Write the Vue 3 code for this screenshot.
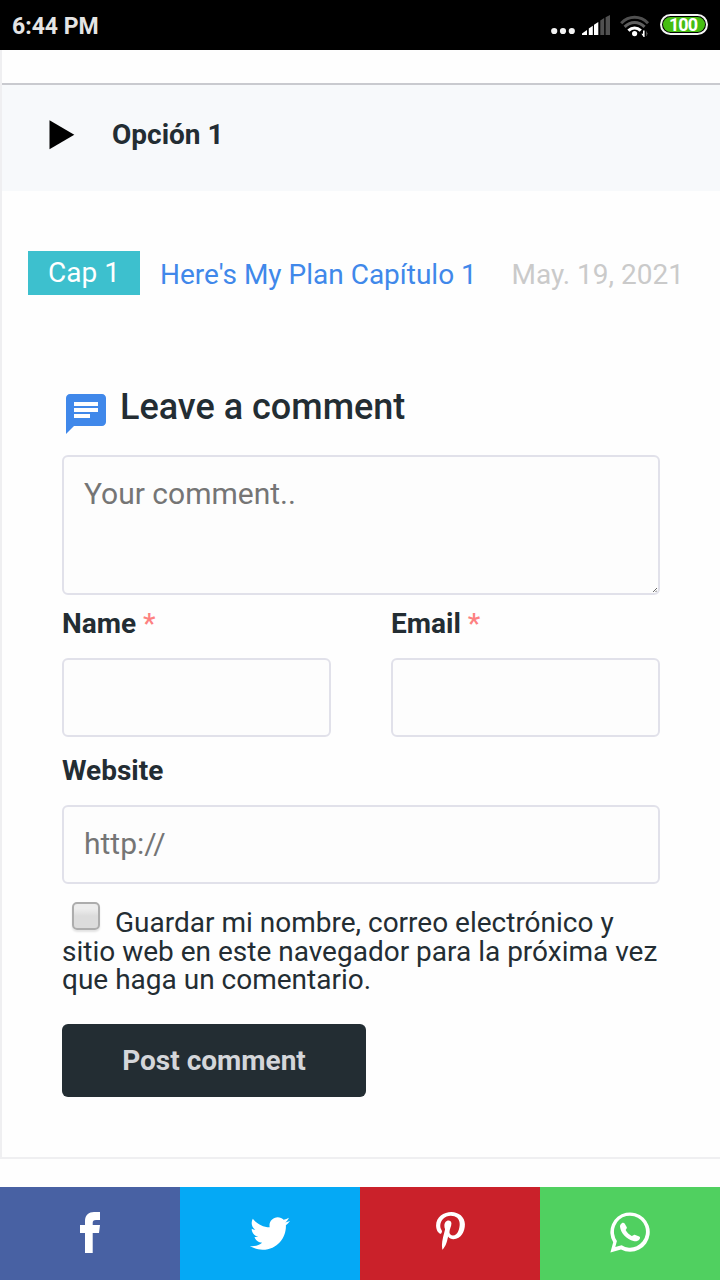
<template>
  <div class="screen">
    <header class="status-bar">
      <span class="clock">6:44 PM</span>
      <div class="status-icons">
        <svg class="dots" viewBox="0 0 24 8" width="24" height="8" fill="#f2f2f2">
          <circle cx="3.2" cy="4" r="3.1" />
          <circle cx="12" cy="4" r="3.1" />
          <circle cx="20.8" cy="4" r="3.1" />
        </svg>
        <svg class="signal" viewBox="0 0 28 20" width="28" height="20">
          <path fill="#fff" d="M0 20v-1.5l5-3.6V20zM6.8 20v-6.5l4-2.8V20zM12 20V9.8L16.3 7v13z" />
          <path fill="#505050" d="M18.3 20V5.6l3.9-2.7V20zM23.6 20V2.2L28 0v20z" />
        </svg>
        <svg class="wifi" viewBox="0 0 30 22" width="30" height="22" fill="none">
          <path stroke="#505050" stroke-width="3" d="M1.2 8.2C9 .4 20.2.4 28 8.2" />
          <path stroke="#606060" stroke-width="3" d="M4.6 11.8c6-5.8 14-5.8 20 0" />
          <path stroke="#fff" stroke-width="3.2" d="M8.4 15.6c3.8-3.4 8.6-3.4 12.4 0" />
          <circle cx="14.6" cy="18.6" r="2.6" fill="#fff" />
          <path fill="#fff" d="M21.4 18.8h1.6V15.6h1.6V22h-1z" />
          <path fill="#505050" d="M26 15.6l2 3.6h-1.2V21H26z" />
        </svg>
        <div class="battery"><span>100</span></div>
      </div>
    </header>

    <main class="page">
      <div class="option-bar">
        <svg viewBox="0 0 26 30" width="26" height="30"><path d="M.5.2L25.3 14.7.5 29.3z" /></svg>
        <strong>Opción 1</strong>
      </div>

      <div class="chapter">
        <span class="tag">Cap 1</span>
        <a class="chapter-link">Here's My Plan Capítulo 1</a>
        <time>May. 19, 2021</time>
      </div>

      <form class="comment-form" @submit.prevent>
        <h3>
          <svg viewBox="0 0 24 24" width="48" height="48" fill="#4088ea">
            <path d="M20 2H4c-1.1 0-2 .9-2 2v18l4-4h14c1.1 0 2-.9 2-2V4c0-1.1-.9-2-2-2zM6 6h12v2H6V6zm0 3h12v2H6V9zm8 5H6v-2h8v2z" />
          </svg>
          <span>Leave a comment</span>
        </h3>
        <div class="comment-box">
          <textarea v-model="form.comment" placeholder="Your comment.."></textarea>
          <svg class="grip" viewBox="0 0 4 4" width="4" height="4" stroke="#444" stroke-width="0.8">
            <path d="M0 4l4-4M2.5 4L4 2.5" />
          </svg>
        </div>
        <div class="field-row">
          <div class="field">
            <label for="name">Name <i>*</i></label>
            <input id="name" v-model="form.name" type="text" />
          </div>
          <div class="field">
            <label for="email">Email <i>*</i></label>
            <input id="email" v-model="form.email" type="text" />
          </div>
        </div>
        <div class="field">
          <label for="website">Website</label>
          <input id="website" v-model="form.website" type="text" placeholder="http://" />
        </div>
        <label class="consent">
          <input v-model="form.remember" type="checkbox" />Guardar mi nombre, correo electrónico y<br />
          sitio web en este navegador para la próxima vez<br />
          que haga un comentario.
        </label>
        <button type="submit">Post comment</button>
      </form>
    </main>

    <nav class="share">
      <a v-for="item in shares" :key="item.name" :class="item.name" :aria-label="item.name">
        <svg :viewBox="item.viewBox" :width="item.width" :height="item.height" fill="#fff">
          <path :d="item.path" />
          <path v-if="item.extra" :d="item.extra" />
        </svg>
      </a>
    </nav>
  </div>
</template>

<script setup>
import { reactive } from 'vue'

const form = reactive({
  comment: '',
  name: '',
  email: '',
  website: '',
  remember: false,
})

const shares = [
  {
    name: 'facebook',
    viewBox: '0 0 20 41',
    width: 20,
    height: 41,
    path: 'M20 0v8h-4c-2.5 0-3.3 1-3.3 3v2H20l-1 8h-6.3v20H5V21H0v-8h5V9C5 3 9 0 14 0z',
  },
  {
    name: 'twitter',
    viewBox: '0 48 512 416',
    width: 40,
    height: 33,
    path: 'M459.37 151.716c.325 4.548.325 9.097.325 13.645 0 138.72-105.583 298.558-298.558 298.558-59.452 0-114.68-17.219-161.137-47.106 8.447.974 16.568 1.299 25.34 1.299 49.055 0 94.213-16.568 130.274-44.832-46.132-.975-84.792-31.188-98.112-72.772 6.498.974 12.995 1.624 19.818 1.624 9.421 0 18.843-1.3 27.614-3.573-48.081-9.747-84.143-51.98-84.143-102.985v-1.299c13.969 7.797 30.214 12.67 47.431 13.319-28.264-18.843-46.781-51.005-46.781-87.391 0-19.492 5.197-37.36 14.294-52.954 51.655 63.675 129.3 105.258 216.365 109.807-1.624-7.797-2.599-15.918-2.599-24.04 0-57.828 46.782-104.934 104.934-104.934 30.213 0 57.502 12.67 76.67 33.137 23.715-4.548 46.456-13.32 66.599-25.34-7.798 24.366-24.366 44.833-46.132 57.827 21.117-2.273 41.584-8.122 60.426-16.243-14.292 20.791-32.161 39.308-52.628 54.253z',
  },
  {
    name: 'pinterest',
    viewBox: '0 6 384 506',
    width: 29,
    height: 38,
    path: 'M204 6.5C101.4 6.5 0 74.9 0 185.6 0 256 39.6 296 63.6 296c9.9 0 15.6-27.6 15.6-35.4 0-9.3-23.7-29.1-23.7-67.8 0-80.4 61.2-137.4 140.4-137.4 68.1 0 118.5 38.7 118.5 109.8 0 53.1-21.3 152.7-90.3 152.7-24.9 0-46.2-18-46.2-43.8 0-37.8 26.4-74.4 26.4-113.4 0-66.2-93.9-54.2-93.9 25.8 0 16.8 2.1 35.4 9.6 50.7-13.8 59.4-42 147.9-42 209.1 0 18.9 2.7 37.5 4.5 56.4 3.4 3.8 1.7 3.4 6.9 1.5 50.4-69 48.6-82.5 71.4-172.8 12.3 23.4 44.1 36 69.3 36 106.2 0 153.9-103.5 153.9-196.8C384 71.3 298.2 6.5 204 6.5z',
  },
  {
    name: 'whatsapp',
    viewBox: '0 0 40 41',
    width: 40,
    height: 41,
    path: 'M.4 40.6l2.8-10.3A19.7 19.7 0 1 1 11 37.6zM11.6 33.3A16 16 0 1 0 6.9 28.9L5.3 34.9z',
    extra: 'M11.8 11.2c1.1-.8 2.4-.4 3 .6l2 3.4c.5 1-1 2-1.200 2.900 1.300 2.400 3.600 4.700 6.100 5.900 1-.1 1.900-1.600 3-1.300l4.500 1.900c1.200.5 1 1.600.3 2.700-1.400 2-3.900 2.300-6 1.800C17 27.700 10.600 21 10 14.800c-.1-1.500.6-2.800 1.800-3.600z',
  },
]
</script>

<style>
body {
  margin: 0;
  background: #fefefe;
}
</style>

<style scoped>
.screen {
  height: 1280px;
  display: flex;
  flex-direction: column;
  overflow: hidden;
  background: #fefefe;
  color: #232d33;
  font-family: Roboto, sans-serif;
}

.screen * {
  box-sizing: border-box;
}

.status-bar {
  height: 50px;
  flex-shrink: 0;
  display: flex;
  justify-content: space-between;
  padding: 0 12px;
  background: #000;
  color: #e4e4e4;
}

.clock {
  font-size: 23px;
  font-weight: 700;
  line-height: 53px;
}

.status-icons {
  display: flex;
  align-items: flex-start;
}

.dots {
  margin-top: 27px;
}

.signal {
  margin: 15px 0 0 7px;
}

.wifi {
  margin: 15px 0 0 10px;
}

.battery {
  width: 48px;
  height: 21px;
  margin: 14px 0 0 10px;
  border: 2px solid #f5f5f5;
  border-radius: 11px;
  padding: 1px;
}

.battery span {
  display: block;
  height: 15px;
  padding-right: 2px;
  border-radius: 8px;
  background: #45bd12;
  color: #fff;
  font-size: 18px;
  font-weight: 700;
  letter-spacing: -1px;
  line-height: 16px;
  text-align: center;
}

.page {
  height: 1109px;
  flex-shrink: 0;
  padding-top: 33px;
  border-left: 2px solid #efeff1;
  border-bottom: 2px solid #efeff1;
}

.option-bar {
  height: 108px;
  display: flex;
  align-items: flex-start;
  padding: 35px 0 0 47px;
  border-top: 2px solid #c9cacf;
  background: #f7f9fb;
}

.option-bar strong {
  margin-left: 37px;
  font-size: 28px;
  line-height: 30px;
}

.chapter {
  display: flex;
  height: 44px;
  margin: 60px 36px 0 26px;
  font-size: 28px;
  line-height: 47px;
  white-space: nowrap;
}

.tag {
  width: 112px;
  background: #3dc0ce;
  color: #fff;
  line-height: 44px;
  text-align: center;
}

.chapter-link {
  margin-left: 20px;
  color: #4088ea;
}

.chapter time {
  margin-left: auto;
  color: #cacaca;
}

.comment-form {
  margin: 95px 60px 0;
}

h3 {
  display: flex;
  height: 65px;
  margin: 0;
  font-size: 36px;
  font-weight: 500;
  line-height: 34px;
}

h3 span {
  margin-left: 10px;
}

.comment-box {
  position: relative;
}

.grip {
  position: absolute;
  right: 3px;
  bottom: 3px;
}

textarea,
input[type='text'] {
  display: block;
  width: 100%;
  border: 2px solid #e1e1ea;
  border-radius: 6px;
  background: #fdfdfd;
  color: #232d33;
  font-family: inherit;
  font-size: 30px;
  padding: 18px 20px;
}

textarea {
  height: 140px;
  padding-top: 19px;
  resize: none;
}

input[type='text'] {
  height: 79px;
  padding: 17px 20px 19px;
}

::placeholder {
  color: #757575;
}

.field-row {
  display: flex;
  gap: 60px;
}

.field {
  flex: 1;
}

.field label {
  display: block;
  height: 63px;
  padding-top: 12px;
  font-size: 28px;
  font-weight: 700;
  line-height: 33px;
}

.field-row + .field label {
  height: 68px;
  padding-top: 17px;
}

.field i {
  color: #fd8181;
  font-style: normal;
  font-weight: 500;
}

.consent {
  display: block;
  height: 140px;
  padding-top: 25px;
  font-size: 28px;
  line-height: 28.5px;
  white-space: nowrap;
}

.consent input {
  appearance: none;
  width: 28px;
  height: 28px;
  margin: -7px 15px -7px 10px;
  border: 2px solid #adadad;
  border-radius: 5px;
  background: linear-gradient(#ededed 20%, #dcdcdc 50%);
  box-shadow: 0 2px 2px #e3e3e3;
  vertical-align: 9px;
}

button {
  display: block;
  width: 304px;
  height: 73px;
  padding: 0;
  border: 0;
  border-radius: 6px;
  background: #232d33;
  color: #d4d6da;
  font: 700 28px Roboto, sans-serif;
}

.share {
  display: flex;
  height: 93px;
  flex-shrink: 0;
  margin-top: 28px;
}

.share a {
  flex: 1;
  display: flex;
  align-items: center;
  justify-content: center;
}

.facebook {
  background: #4861a3;
}

.facebook svg {
  margin-bottom: 2px;
}

.twitter {
  background: #05a9f5;
}

.pinterest {
  background: #ca212a;
}

.pinterest svg {
  margin-bottom: 5px;
}

.whatsapp {
  background: #50d060;
}

.whatsapp svg {
  margin-bottom: 2px;
}
</style>
